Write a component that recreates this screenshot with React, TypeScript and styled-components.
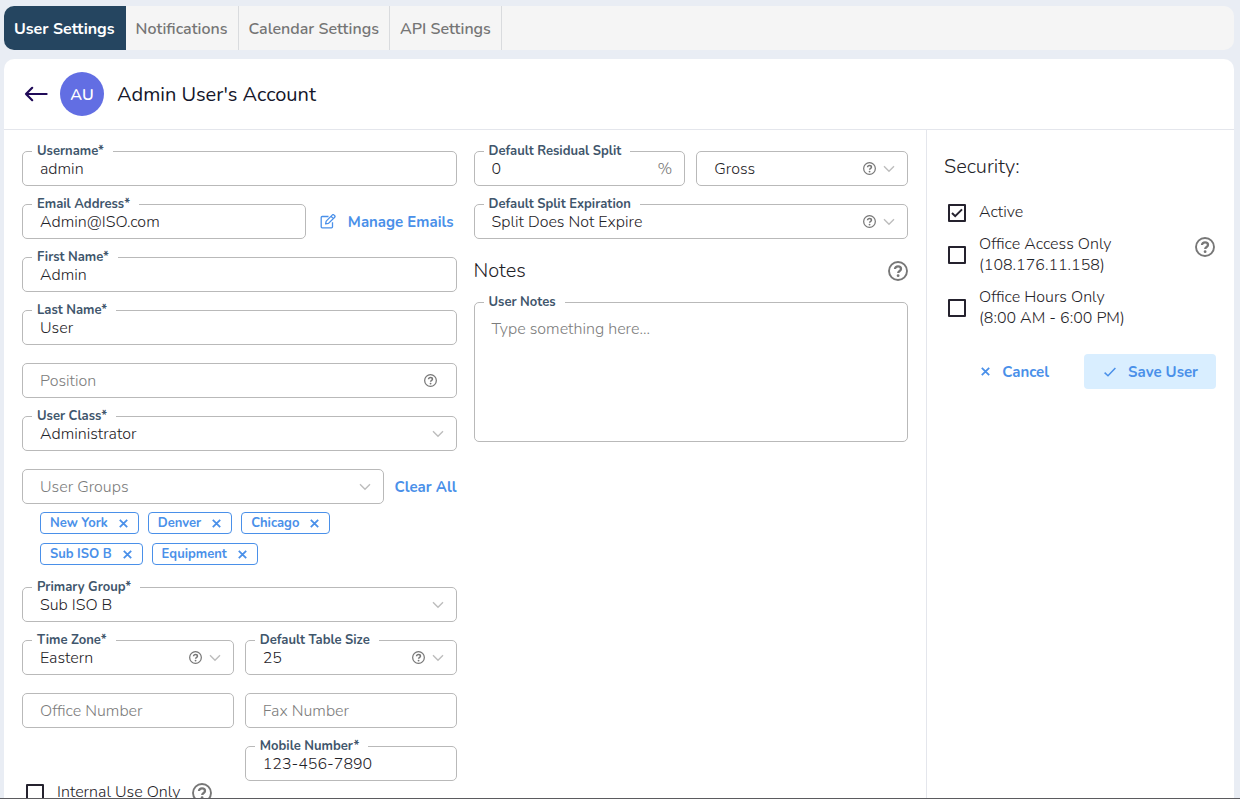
import React from "react";
import styled, { createGlobalStyle } from "styled-components";

const color = {
  ink: "#1f2328",
  label: "#3f566c",
  muted: "#7c7c7c",
  line: "#b9b9b9",
  rule: "#e4e6ec",
  link: "#4a90e9",
  navy: "#254560",
};

const GlobalStyle = createGlobalStyle`
  *, *::before, *::after { box-sizing: border-box; }
  body { margin: 0; background: #e9edf4; }
  body, button, input, select, textarea {
    font-family: Nunito, "Open Sans", sans-serif;
  }
`;

const Page = styled.div`
  display: flex;
  flex-direction: column;
  gap: 9px;
  height: 100vh;
  padding: 6px 6px 0 4px;
  border-bottom: 1px solid #5b5b5f;
`;

const Tabs = styled.nav`
  display: flex;
  flex: none;
  height: 44px;
  border-radius: 10px;
  background: #f5f5f5;
  overflow: hidden;
`;

const Tab = styled.button<{ $active?: boolean }>`
  padding: 2px 10px 0;
  border: 0;
  border-right: 1px solid ${(p) => (p.$active ? color.navy : "#d9dbde")};
  background: ${(p) => (p.$active ? color.navy : "transparent")};
  color: ${(p) => (p.$active ? "#fff" : "#757575")};
  font-size: 16px;
  font-weight: ${(p) => (p.$active ? 700 : 600)};
  white-space: nowrap;
`;

const Panel = styled.main`
  flex: 1;
  min-height: 0;
  overflow-y: auto;
  scrollbar-width: none;
  display: flex;
  flex-direction: column;
  border-radius: 10px 10px 0 0;
  background: #fff;
`;

const Header = styled.header`
  display: flex;
  align-items: center;
  flex: none;
  padding: 13px 20px;
  border-bottom: 1px solid ${color.rule};
`;

const IconButton = styled.button`
  display: inline-flex;
  padding: 0;
  border: 0;
  background: none;
  color: inherit;
`;

const Avatar = styled.div`
  display: grid;
  place-items: center;
  width: 44px;
  height: 44px;
  margin: 0 13px 0 12px;
  padding-top: 2px;
  border-radius: 50%;
  background: #626ee3;
  color: #fff;
  font-size: 16px;
  font-weight: 600;
`;

const Title = styled.h1`
  margin: 0;
  color: #14162a;
  font-size: 20px;
  font-weight: 400;
`;

const Body = styled.div`
  display: flex;
  flex: 1 0 auto;
`;

const Form = styled.form`
  flex: 1;
  display: grid;
  grid-template-columns: minmax(0, 1fr) minmax(0, 1fr);
  gap: 17px;
  align-items: start;
  padding: 21px 18px 18px;
`;

const Stack = styled.div`
  display: flex;
  flex-direction: column;
  gap: 18px;
`;

const Row = styled.div`
  display: flex;
  align-items: center;
  gap: 11px;
`;

const HalfRow = styled.div`
  display: grid;
  grid-template-columns: minmax(0, 1fr) minmax(0, 1fr);
  gap: 11px;
`;

const LastInRow = styled.div`
  grid-column: 2;
`;

const Box = styled.div<{ $tall?: boolean; $grow?: boolean }>`
  position: relative;
  display: flex;
  flex: ${(p) => (p.$grow ? "1" : "none")};
  min-width: 0;
  align-items: center;
  gap: 7px;
  height: ${(p) => (p.$tall ? 140 : 35)}px;
  padding-right: 12px;
  border: 1px solid ${color.line};
  border-radius: 5px;
  color: #777;
`;

const Label = styled.label`
  position: absolute;
  top: -9px;
  left: 9px;
  padding: 0 9px 0 5px;
  background: #fff;
  color: ${color.label};
  font-size: 13px;
  font-weight: 700;
  line-height: 17px;
  white-space: nowrap;
`;

const Input = styled.input`
  flex: 1;
  min-width: 0;
  height: 33px;
  padding: 0 0 0 17px;
  border: 0;
  outline: 0;
  background: transparent;
  color: ${color.ink};
  font-size: 16px;
  font-weight: 300;
  &::placeholder { color: ${color.muted}; opacity: 1; }
`;

const Select = styled(Input).attrs({ as: "select" })<{ $muted?: boolean }>`
  appearance: none;
  color: ${(p) => (p.$muted ? color.muted : color.ink)};
`;

const TextArea = styled.textarea`
  flex: 1;
  align-self: stretch;
  padding: 16px 17px;
  border: 0;
  outline: 0;
  resize: none;
  background: transparent;
  color: ${color.ink};
  font-size: 16px;
  font-weight: 300;
  line-height: 21px;
  &::placeholder { color: ${color.muted}; opacity: 1; }
`;

const Unit = styled.span`
  font-size: 16px;
  font-weight: 300;
`;

const TextButton = styled.button<{ $filled?: boolean; $flush?: boolean }>`
  display: inline-flex;
  align-items: center;
  gap: 12px;
  height: 35px;
  padding: ${(p) => (p.$filled ? "0 18px 0 20px" : p.$flush ? "0" : "0 3px")};
  border: 0;
  border-radius: 4px;
  background: ${(p) => (p.$filled ? "#d9eeff" : "none")};
  color: ${color.link};
  font-size: 15px;
  font-weight: 700;
  white-space: nowrap;
`;

const Groups = styled.div`
  padding-bottom: 4px;
`;

const Chips = styled.ul`
  display: flex;
  flex-wrap: wrap;
  gap: 9px;
  max-width: 340px;
  margin: 0;
  padding: 8px 0 0 18px;
  list-style: none;
`;

const Chip = styled.li`
  display: flex;
  align-items: center;
  gap: 11px;
  height: 22px;
  padding: 0 10px 0 9px;
  border: 1px solid ${color.link};
  border-radius: 4px;
  color: ${color.link};
  font-size: 13px;
  font-weight: 700;
  line-height: 18px;
`;

const Heading = styled.h2`
  margin: 0;
  color: ${color.ink};
  font-size: 20px;
  font-weight: 300;
  line-height: 27px;
`;

const HeadingRow = styled.div`
  display: flex;
  align-items: center;
  justify-content: space-between;
`;

const Aside = styled.aside`
  flex: 0 0 308px;
  padding: 23px 18px 18px 17px;
  border-left: 1px solid ${color.rule};
`;

const Checks = styled.div`
  display: flex;
  flex-direction: column;
  gap: 11px;
  margin: 22px 0 25px;
`;

const CheckRow = styled.div`
  display: flex;
  align-items: flex-start;
  justify-content: space-between;
  padding-left: 4px;
`;

const InternalRow = styled(CheckRow)`
  justify-content: flex-start;
  align-items: center;
  gap: 12px;
  padding-top: 1px;
`;

const CheckLabel = styled.label`
  display: flex;
  align-items: center;
  gap: 13px;
  color: ${color.ink};
  font-size: 16px;
  font-weight: 300;
  line-height: 21px;
`;

const CheckBox = styled.span`
  display: grid;
  width: 18px;
  height: 18px;
  > * { grid-area: 1 / 1; }
  > svg { pointer-events: none; visibility: hidden; }
  > input:checked + svg { visibility: visible; }
`;

const CheckInput = styled.input`
  appearance: none;
  width: 18px;
  height: 18px;
  margin: 0;
  border: 2px solid #25222e;
  border-radius: 1px;
`;

const Help = styled(IconButton)`
  color: #777;
`;

const InsetHelp = styled(Help)`
  margin-right: 7px;
`;

const RowHelp = styled(Help)`
  padding: 3px 1px 0 0;
`;

const Actions = styled.div`
  display: flex;
  justify-content: flex-end;
  gap: 32px;
`;

const HelpIcon = ({ size = 13 }: { size?: number }) => (
  <svg width={size} height={size} viewBox="0 0 20 20" fill="none" stroke="currentColor" aria-hidden="true">
    <circle cx="10" cy="10" r="9" strokeWidth="1.9" />
    <path d="M7 8.1c0-1.6 1.3-2.7 3-2.7s3 1.1 3 2.6c0 2-2.8 1.9-2.8 4" strokeWidth="2.3" />
    <circle cx="10.1" cy="14.7" r="1.4" fill="currentColor" stroke="none" />
  </svg>
);

const Chevron = () => (
  <svg width="12" height="8" viewBox="0 0 12 8" fill="none" stroke="#bdbdbd" strokeWidth="1.4" aria-hidden="true">
    <path d="M1 1.2 6 6.2l5-5" />
  </svg>
);

const Cross = () => (
  <svg width="9" height="9" viewBox="0 0 9 9" fill="none" stroke="currentColor" strokeWidth="1.8" aria-hidden="true">
    <path d="M.8.8l7.4 7.4M8.2.8.8 8.2" />
  </svg>
);

const Tick = () => (
  <svg width="12" height="10" viewBox="0 0 12 10" fill="none" stroke="currentColor" strokeWidth="1.5" aria-hidden="true">
    <path d="M.6 5.6 4 8.8 11.4 1" />
  </svg>
);

const BackArrow = () => (
  <svg width="24" height="16" viewBox="0 0 24 16" fill="none" stroke="#200a58" strokeWidth="2.2" strokeLinecap="round" strokeLinejoin="round" aria-hidden="true">
    <path d="M22.6 8H2M8.2 1.8 2 8l6.2 6.2" />
  </svg>
);

const EditIcon = () => (
  <svg width="16" height="15" viewBox="0 0 16 15" fill="none" stroke="currentColor" strokeWidth="1.3" strokeLinejoin="round" aria-hidden="true">
    <path d="M8.5 2.5H2.2a1 1 0 0 0-1 1v9.3a1 1 0 0 0 1 1h9.3a1 1 0 0 0 1-1V8.2" />
    <path d="M5.6 9.9l.6-2.8L12.4.9a1 1 0 0 1 1.4 0l.9.9a1 1 0 0 1 0 1.4L8.5 9.4zM11 2.3l2.3 2.3" />
  </svg>
);

type FieldProps = {
  id: string;
  label?: string;
  value?: string;
  placeholder?: string;
  help?: boolean;
  unit?: string;
  grow?: boolean;
};

const TextField = ({ id, label, value, placeholder, help, unit, grow }: FieldProps) => (
  <Box $grow={grow}>
    <Input id={id} defaultValue={value} placeholder={placeholder} aria-label={label ? undefined : placeholder} />
    {label && <Label htmlFor={id}>{label}</Label>}
    {unit && <Unit>{unit}</Unit>}
    {help && (
      <InsetHelp type="button" aria-label="Help">
        <HelpIcon />
      </InsetHelp>
    )}
  </Box>
);

const SelectField = ({ id, label, value, placeholder, help, grow }: FieldProps) => (
  <Box $grow={grow}>
    <Select id={id} $muted={!value} aria-label={label ? undefined : placeholder ?? value}>
      <option>{value ?? placeholder}</option>
    </Select>
    {label && <Label htmlFor={id}>{label}</Label>}
    {help && (
      <Help type="button" aria-label="Help">
        <HelpIcon />
      </Help>
    )}
    <Chevron />
  </Box>
);

const Check = ({ checked, children }: { checked?: boolean; children: React.ReactNode }) => (
  <CheckLabel>
    <CheckBox>
      <CheckInput type="checkbox" defaultChecked={checked} />
      <svg width="18" height="18" viewBox="0 0 18 18" fill="none" stroke="#25222e" strokeWidth="2" aria-hidden="true">
        <path d="M4 9l3.2 3.2L14 5.4" />
      </svg>
    </CheckBox>
    <span>{children}</span>
  </CheckLabel>
);

const tabs = ["User Settings", "Notifications", "Calendar Settings", "API Settings"];
const groups = ["New York", "Denver", "Chicago", "Sub ISO B", "Equipment"];

export default function App() {
  return (
    <>
      <GlobalStyle />
      <Page>
        <Tabs>
          {tabs.map((t, i) => (
            <Tab key={t} type="button" $active={i === 0}>{t}</Tab>
          ))}
        </Tabs>
        <Panel>
          <Header>
            <IconButton type="button" aria-label="Back"><BackArrow /></IconButton>
            <Avatar>AU</Avatar>
            <Title>Admin User's Account</Title>
          </Header>
          <Body>
            <Form id="user-form" onSubmit={(e) => e.preventDefault()}>
              <div>
                <Stack>
                  <TextField id="username" label="Username*" value="admin" />
                  <Row>
                    <TextField id="email" label="Email Address*" value="Admin@ISO.com" grow />
                    <TextButton type="button"><EditIcon />Manage Emails</TextButton>
                  </Row>
                  <TextField id="first" label="First Name*" value="Admin" />
                  <TextField id="last" label="Last Name*" value="User" />
                  <TextField id="position" placeholder="Position" help />
                  <SelectField id="class" label="User Class*" value="Administrator" />
                  <Groups>
                    <Row>
                      <SelectField id="groups" placeholder="User Groups" grow />
                      <TextButton type="button" $flush>Clear All</TextButton>
                    </Row>
                    <Chips>
                      {groups.map((g) => (
                        <Chip key={g}>
                          {g}
                          <IconButton type="button" aria-label={`Remove ${g}`}><Cross /></IconButton>
                        </Chip>
                      ))}
                    </Chips>
                  </Groups>
                  <SelectField id="primary" label="Primary Group*" value="Sub ISO B" />
                  <HalfRow>
                    <SelectField id="zone" label="Time Zone*" value="Eastern" help />
                    <SelectField id="size" label="Default Table Size" value="25" help />
                  </HalfRow>
                  <HalfRow>
                    <TextField id="office" placeholder="Office Number" />
                    <TextField id="fax" placeholder="Fax Number" />
                  </HalfRow>
                  <HalfRow>
                    <LastInRow>
                      <TextField id="mobile" label="Mobile Number*" value="123-456-7890" />
                    </LastInRow>
                  </HalfRow>
                </Stack>
                <InternalRow>
                  <Check>Internal Use Only</Check>
                  <Help type="button" aria-label="Help"><HelpIcon size={20} /></Help>
                </InternalRow>
              </div>
              <Stack>
                <HalfRow>
                  <TextField id="split" label="Default Residual Split" value="0" unit="%" />
                  <SelectField id="basis" value="Gross" help />
                </HalfRow>
                <SelectField id="expiration" label="Default Split Expiration" value="Split Does Not Expire" help />
                <HeadingRow>
                  <Heading>Notes</Heading>
                  <Help type="button" aria-label="Help"><HelpIcon size={20} /></Help>
                </HeadingRow>
                <Box $tall>
                  <TextArea id="notes" placeholder="Type something here..." />
                  <Label htmlFor="notes">User Notes</Label>
                </Box>
              </Stack>
            </Form>
            <Aside>
              <Heading>Security:</Heading>
              <Checks>
                <CheckRow><Check checked>Active</Check></CheckRow>
                <CheckRow>
                  <Check>Office Access Only<br />(108.176.11.158)</Check>
                  <RowHelp type="button" aria-label="Help"><HelpIcon size={20} /></RowHelp>
                </CheckRow>
                <CheckRow><Check>Office Hours Only<br />(8:00 AM - 6:00 PM)</Check></CheckRow>
              </Checks>
              <Actions>
                <TextButton type="button"><Cross />Cancel</TextButton>
                <TextButton type="submit" form="user-form" $filled><Tick />Save User</TextButton>
              </Actions>
            </Aside>
          </Body>
        </Panel>
      </Page>
    </>
  );
}
